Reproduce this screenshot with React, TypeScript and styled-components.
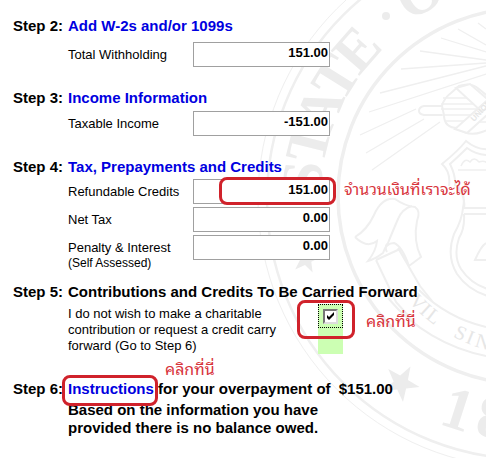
import React from "react";
import styled, { createGlobalStyle } from "styled-components";

const GlobalStyle = createGlobalStyle`
  *, *::before, *::after { box-sizing: border-box; }
  body {
    margin: 0;
    background: #fff;
    color: #000;
    font-family: "Liberation Sans", Arial, sans-serif;
  }
`;

const RED = "#d0222b";

const Page = styled.main`
  position: relative;
  z-index: 0;
  display: flex;
  flex-direction: column;
  min-height: 100vh;
  padding: 16px 12px 20px 13px;
  overflow: hidden;
`;

const SealArt = styled.svg`
  position: absolute;
  z-index: -1;
  left: 256px;
  top: -76px;
  width: 544px;
  height: 544px;
`;

const Step = styled.section<{ $space: number }>`
  display: grid;
  grid-template-columns: 55px minmax(0, 1fr);
  margin-bottom: ${(p) => p.$space}px;
`;

const StepName = styled.span`
  font-size: 15px;
  font-weight: bold;
  line-height: 20px;
  white-space: nowrap;
`;

const StepTitle = styled.h2`
  margin: 0;
  font-size: 15px;
  font-weight: bold;
  line-height: 20px;
  white-space: nowrap;
`;

const StepLink = styled.a`
  position: relative;
  color: #0000e0;
  text-decoration: none;
`;

const Rows = styled.div<{ $top: number }>`
  grid-column: 2;
  display: flex;
  flex-direction: column;
  gap: 3px;
  margin-top: ${(p) => p.$top}px;
`;

const Row = styled.div`
  display: grid;
  grid-template-columns: 125px 137px;
`;

const RowLabel = styled.label`
  padding-top: 5px;
  font-size: 13px;
  line-height: 16px;
  white-space: nowrap;
`;

const Note = styled.small`
  display: block;
  font-size: 12px;
  line-height: 15px;
`;

const FieldBox = styled.div`
  position: relative;
  height: 25px;
`;

const Amount = styled.input`
  display: block;
  width: 100%;
  height: 25px;
  padding: 0 1px 4px;
  border: 1px solid #a0a0a0;
  border-radius: 0;
  background: #fff;
  color: #000;
  font-family: inherit;
  font-size: 13px;
  font-weight: bold;
  text-align: right;
  outline: none;
`;

const Ring = styled.span<{ $x: number; $y: number; $w: number; $h: number }>`
  position: absolute;
  left: ${(p) => p.$x}px;
  top: ${(p) => p.$y}px;
  width: ${(p) => p.$w}px;
  height: ${(p) => p.$h}px;
  border: 3px solid ${RED};
  border-radius: 8px;
  pointer-events: none;
`;

const Callout = styled.span<{ $x: number; $y: number }>`
  position: absolute;
  left: ${(p) => p.$x}px;
  top: ${(p) => p.$y}px;
  color: #d8343c;
  font-family: "Noto Sans Thai Looped", "Loma", "Garuda", "Waree", "Norasi", "Tahoma", sans-serif;
  font-size: 16px;
  font-weight: normal;
  line-height: 24px;
  white-space: nowrap;
`;

const Choice = styled.div`
  grid-column: 2;
  display: grid;
  grid-template-columns: 250px 25px;
  margin-top: 2px;
`;

const ChoiceLabel = styled.label`
  max-width: 220px;
  padding-top: 2px;
  font-size: 13px;
  line-height: 16px;
`;

const ChoiceCell = styled.div`
  position: relative;
  height: 50px;
  background: #ccffb3;
`;

const FocusFrame = styled.div`
  position: relative;
  display: flex;
  align-items: center;
  justify-content: center;
  height: 24px;
  border: 1px dotted #000;
`;

const Tick = styled.input`
  appearance: none;
  width: 15px;
  height: 15px;
  margin: 0;
  border: 2px solid;
  border-color: #777 #ddd #ddd #777;
  border-radius: 0;
  background: #fff;
  outline: none;
`;

const TickMark = styled.svg`
  position: absolute;
  width: 9px;
  height: 9px;
  pointer-events: none;
  visibility: hidden;
  ${Tick}:checked + & {
    visibility: visible;
  }
`;

const Summary = styled.p`
  grid-column: 2;
  max-width: 260px;
  margin: 2px 0 0;
  font-size: 15px;
  font-weight: bold;
  line-height: 18px;
`;

const Gap = styled.span`
  padding-left: 4px;
`;

const CX = 527;
const CY = 197;

const rimLetters: { ch: string; angle: number; radius: number }[] = [
  { ch: "S", angle: 5, radius: 206 },
  { ch: "T", angle: 14, radius: 206 },
  { ch: "A", angle: 23, radius: 206 },
  { ch: "T", angle: 32, radius: 206 },
  { ch: "E", angle: 41, radius: 206 },
  { ch: "O", angle: 62, radius: 211 },
  { ch: "F", angle: 74, radius: 211 },
];

const star = (x: number, y: number, r: number, turn: number) =>
  Array.from({ length: 10 }, (_, i) => {
    const a = ((i * 36 + turn - 90) * Math.PI) / 180;
    const d = i % 2 ? r * 0.4 : r;
    return `${(x + d * Math.cos(a)).toFixed(1)},${(y + d * Math.sin(a)).toFixed(1)}`;
  }).join(" ");

function Seal() {
  return (
    <SealArt viewBox="256 -76 544 544" aria-hidden="true" fill="none" stroke="#efefef" strokeWidth="2">
      <circle cx={CX} cy={199} r="269" strokeWidth="1" />
      <circle cx={CX} cy={199} r="260" strokeWidth="2.5" />
      <circle cx="526" cy="196" r="188" strokeWidth="3.5" />
      <g fill="#ececec" stroke="none" fontFamily="Liberation Serif, serif" fontWeight="bold" textAnchor="middle">
        {rimLetters.map((l, i) => (
          <text key={i} x={CX} y={CY - l.radius} fontSize="58" transform={`rotate(${l.angle - 90} ${CX} ${CY})`}>
            {l.ch}
          </text>
        ))}
        <circle cx="386" cy="16" r="4" />
        <text x={CX} y={CY + 243} fontSize="60" transform={`rotate(18 ${CX} ${CY})`}>1</text>
        <text x={CX} y={CY + 243} fontSize="60" transform={`rotate(9 ${CX} ${CY})`}>8</text>
        <polygon points={star(401, 383, 19, 30)} />
        <polygon points={star(306, 259, 15, 10)} />
      </g>
      <path d="M388 298A170 170 0 0 0 486 356M419 290A140 140 0 0 0 486 327" />
      <g fill="#e6e6e6" stroke="none" fontFamily="Liberation Serif, serif" fontSize="20" textAnchor="middle">
        {[
          { ch: "V", angle: 46 },
          { ch: "I", angle: 42 },
          { ch: "L", angle: 38 },
          { ch: "S", angle: 26 },
          { ch: "I", angle: 22 },
          { ch: "N", angle: 17 },
        ].map((l, i) => (
          <text key={i} x={CX} y={CY + 158} transform={`rotate(${l.angle} ${CX} ${CY})`}>
            {l.ch}
          </text>
        ))}
      </g>
      <path
        strokeWidth="1.3"
        d="M478 23l8 6M458 29l28 16M441 38l45 14M420 51l66 9M401 69l85-6M380 93l106-27M369 112l117-38M360 135l56-26M366 153l58-34M372 170l68-48"
      />
      <path d="M442 106h-18q-5 1-5 5q0 3 5 4h18M442 106q2-8 9-13l8-7q12-4 20 3l11 9v31l-8 3q-14 5-24-4q-14 0-14-13z" fill="#fff" />
      <path d="M443 98h28M441 104h36M441 109h42M442 115h34M445 121h26M454 128h12M486 122h-10" strokeWidth="1.5" />
      <path d="M456 88l26 24l10-9l-22-19zM492 96l-37 33l12 4l30-27z" fill="#fff" />
      <text
        x="474" y="122" fill="#e6e6e6" stroke="none" fontSize="8" fontWeight="bold"
        fontFamily="Liberation Sans, sans-serif" transform="rotate(-46 474 122)"
      >
        UNION
      </text>
      <path d="M492 149q-14 2-26-8q-8 10-24 23q9 8 7 22M492 155q-14 1-25-7q-8 8-17 16q6 12 5 22" />
      <path d="M461 166q4-9 9-4q4-6 9 0q6-2 9 2M458 170h30" strokeWidth="1.5" />
      <path d="M456 186q10 10 8 22h24M464 214h24M464 214q1 14-5 24q-6 18 2 31q10 15 27 20M458 186q8 9 5 22q-1 12-9 26q-8 22 3 40q11 16 31 22M486 243q-5 3-11 17h12" />
      <path d="M355 237q12-7 19-22q8-18 21-16q10 7 20 8q6 4 2 14q-4 20 4 36l-12 9q-7-20-15-23q-8 0-11 10q-8 6-15 8q8-10 9-20q-10 8-22-4M412 206q-10 3-14 13q-6 14-10 24q-4 4-1 9M376 260l24-11M376 260l20 42l16 18M398 248l22 38l12 15" />
    </SealArt>
  );
}

interface MoneyRowProps {
  id: string;
  label: string;
  note?: string;
  value: string;
  children?: React.ReactNode;
}

function MoneyRow({ id, label, note, value, children }: MoneyRowProps) {
  return (
    <Row>
      <RowLabel htmlFor={id}>
        {label}
        {note && <Note>{note}</Note>}
      </RowLabel>
      <FieldBox>
        <Amount id={id} type="text" defaultValue={value} />
        {children}
      </FieldBox>
    </Row>
  );
}

export default function App() {
  return (
    <>
      <GlobalStyle />
      <Page>
        <Seal />
        <Step $space={21}>
          <StepName>Step 2:</StepName>
          <StepTitle><StepLink href="#withholding">Add W-2s and/or 1099s</StepLink></StepTitle>
          <Rows $top={6}>
            <MoneyRow id="withholding" label="Total Withholding" value="151.00" />
          </Rows>
        </Step>
        <Step $space={21}>
          <StepName>Step 3:</StepName>
          <StepTitle><StepLink href="#income">Income Information</StepLink></StepTitle>
          <Rows $top={3}>
            <MoneyRow id="income" label="Taxable Income" value="-151.00" />
          </Rows>
        </Step>
        <Step $space={11}>
          <StepName>Step 4:</StepName>
          <StepTitle><StepLink href="#refundable">Tax, Prepayments and Credits</StepLink></StepTitle>
          <Rows $top={2}>
            <MoneyRow id="refundable" label="Refundable Credits" value="151.00">
              <Ring $x={26} $y={-2} $w={117} $h={28} />
              <Callout $x={151} $y={-3}>จำนวนเงินที่เราจะได้</Callout>
            </MoneyRow>
            <MoneyRow id="net-tax" label="Net Tax" value="0.00" />
            <MoneyRow id="penalty" label="Penalty & Interest" note="(Self Assessed)" value="0.00" />
          </Rows>
        </Step>
        <Step $space={25}>
          <StepName>Step 5:</StepName>
          <StepTitle>Contributions and Credits To Be Carried Forward</StepTitle>
          <Choice>
            <ChoiceLabel htmlFor="no-contribution">
              I do not wish to make a charitable contribution or request a credit carry forward (Go to Step 6)
            </ChoiceLabel>
            <ChoiceCell>
              <FocusFrame>
                <Tick id="no-contribution" type="checkbox" defaultChecked />
                <TickMark viewBox="0 0 9 9" aria-hidden="true">
                  <path d="M1 3v3l2 2l5-5v-3l-5 5z" fill="#000" />
                </TickMark>
              </FocusFrame>
              <Ring $x={-21} $y={-4} $w={58} $h={39} />
              <Callout $x={48} $y={4}>คลิกที่นี่</Callout>
            </ChoiceCell>
          </Choice>
        </Step>
        <Step $space={0}>
          <StepName>Step 6:</StepName>
          <StepTitle>
            <StepLink href="#instructions">
              Instructions
              <Ring $x={-6} $y={-5} $w={96} $h={31} />
              <Callout $x={97} $y={-24}>คลิกที่นี่</Callout>
            </StepLink>{" "}
            for your overpayment of <Gap>$151.00</Gap>
          </StepTitle>
          <Summary>Based on the information you have provided there is no balance owed.</Summary>
        </Step>
      </Page>
    </>
  );
}
